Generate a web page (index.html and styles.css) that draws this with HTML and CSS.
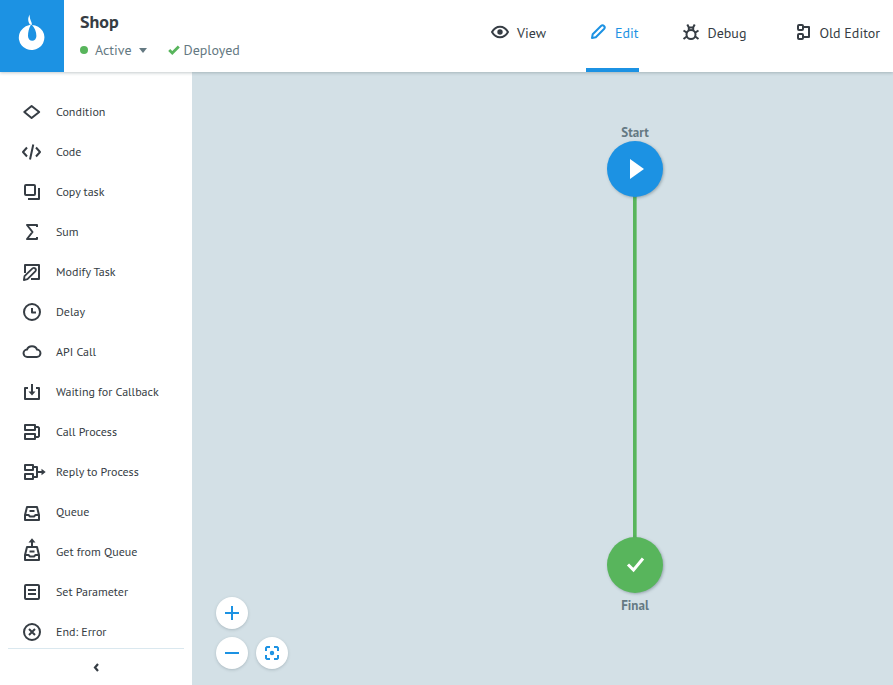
FILE: index.html
```html
<!DOCTYPE html>
<html lang="en">
<head>
<meta charset="utf-8">
<title>Shop</title>
<link rel="stylesheet" href="styles.css">
</head>
<body>
<header class="topbar">
  <a class="logo" href="#" aria-label="Home">
    <svg width="28" height="38" viewBox="-1 0 28 38"><path fill="#fff" d="M10.800 0.500C8.500 4 8.600 8 11.700 11.200C9.800 14.500 9 18 9 22A4.200 4.800 0 0 0 17.400 22C17.400 17.500 15.500 13.500 13 11A12.800 12.500 0 1 1 9.800 11.300L11.700 10.500L13 11C13 7.500 10 5 10.800 0.500Z"/></svg>
  </a>
  <div class="title">
    <h1>Shop</h1>
    <div class="status">
      <button class="state" type="button"><span class="dot"></span>Active<span class="caret"></span></button>
      <span class="deployed"><svg width="12" height="10" viewBox="0 0 12 10"><path d="M1.200 5L4.300 8L10.800 1.500" fill="none" stroke="#58b55c" stroke-width="2.800"/></svg>Deployed</span>
    </div>
  </div>
  <nav class="modes">
    <a href="#"><svg class="icon" viewBox="0 1 24 24"><path d="M4 12C8 5 16 5 20 12C16 19 8 19 4 12Z"/><circle class="solid" cx="12" cy="12" r="2.700"/></svg>View</a>
    <a href="#" class="current"><svg class="icon" viewBox="0 1 24 24"><path d="M6 18L6.700 14.200L15 6C17 4 20 6.800 18 9L9.800 17.300Z"/></svg>Edit</a>
    <a href="#"><svg class="icon" viewBox="0 1 24 24"><circle cx="12" cy="14.500" r="4.500"/><path d="M9.800 10V7.500H14.200V10M9.900 7.500L8.300 4.500M14.100 7.500L15.700 4.500M7.500 12.300L4.500 10.500M16.500 12.300L19.500 10.500M7.800 16.500L4.500 19M16.200 16.500L19.500 19"/></svg>Debug</a>
    <a href="#" class="legacy"><svg class="icon" viewBox="-3 1 24 24"><rect x="5" y="5" width="5" height="5" rx="1"/><rect x="5" y="14" width="5" height="5" rx="1"/><path d="M10 7H16V17H10"/></svg>Old Editor</a>
  </nav>
</header>
<div class="workspace">
  <aside class="sidebar">
    <div class="palette">
      <button type="button"><svg class="icon" viewBox="0 0 24 24"><path d="M4.300 12L11.600 6L19.200 12L11.600 18Z"/></svg>Condition</button>
      <button type="button"><svg class="icon" viewBox="0 0 24 24"><path d="M7 7.500L3 12L7 16.500M16 7.500L20 12L16 16.500M13.300 4.500L10 19.500"/></svg>Code</button>
      <button type="button"><svg class="icon" viewBox="0 0 24 24"><rect x="5" y="5" width="10" height="10" rx="1"/><path d="M19 8V19H8"/></svg>Copy task</button>
      <button type="button"><svg class="icon" viewBox="0 0 24 24"><path d="M17 7V5H7L12.500 12L7 19H17V17"/></svg>Sum</button>
      <button type="button"><svg class="icon" viewBox="0 0 24 24"><path d="M5 13V5H19V19H11"/><path class="fine" d="M3.900 20L4.500 16.200L12.500 8.400C14.500 6.800 17 9.300 15.300 11.300L7.500 19.200Z"/></svg>Modify Task</button>
      <button type="button"><svg class="icon" viewBox="0 0 24 24"><circle cx="12" cy="12" r="8"/><path d="M12 8V12.500H16"/></svg>Delay</button>
      <button type="button"><svg class="icon" viewBox="0 0 24 24"><path d="M7.500 17A3.500 3.500 0 0 1 7 9.600C8.500 5 15.500 5 17 9.600A3.500 3.500 0 0 1 16.500 17Z"/></svg>API Call</button>
      <button type="button"><svg class="icon" viewBox="0 0 24 24"><path d="M8 8H5V19H19V8H16M12 4V13"/><path class="solid" d="M8.500 11.500H15.500L12 15.500Z"/></svg>Waiting for Callback</button>
      <button type="button"><svg class="icon" viewBox="0 0 24 24"><rect x="5" y="5" width="10" height="5"/><rect x="5" y="14" width="10" height="5"/><path d="M15 7H18L19 8V16L18 17H15"/></svg>Call Process</button>
      <button type="button"><svg class="icon" viewBox="0 0 24 24"><rect x="5" y="5" width="8" height="5"/><rect x="5" y="14" width="8" height="5"/><path d="M13 7H17V17H13M17 12H22"/><path class="solid" d="M21.500 8.800V15.200L25.700 12Z"/></svg>Reply to Process</button>
      <button type="button"><svg class="icon" viewBox="0 0 24 24"><path d="M5 15L7 7H17L19 15V20H5ZM5 15H8.500L10 16.500H14L15.500 15H19M9.500 11H14.500"/></svg>Queue</button>
      <button type="button"><svg class="icon" viewBox="0 0 24 24"><path d="M5 15L7 7H17L19 15V20H5ZM5 15H8.500L10 16.500H14L15.500 15H19M9.500 11.500H14.500M12 7V1"/><path class="solid" d="M8.500 2.500H15.500L12 -1.700Z"/></svg>Get from Queue</button>
      <button type="button"><svg class="icon" viewBox="0 0 24 24"><rect x="5" y="5" width="14" height="14" rx="1"/><path d="M8 10H16M8 14H16"/></svg>Set Parameter</button>
      <button type="button"><svg class="icon" viewBox="0 0 24 24"><circle cx="12" cy="12" r="8"/><path d="M9 9L15 15M15 9L9 15"/></svg>End: Error</button>
    </div>
    <button class="collapse" type="button" aria-label="Collapse"><svg width="8" height="10" viewBox="0 0 8 10"><path d="M6 2L3 5.500L6 9" fill="none" stroke="#363d44" stroke-width="2.200"/></svg></button>
  </aside>
  <main class="canvas">
    <div class="edge"></div>
    <div class="node start"><span>Start</span><div class="disc"><svg width="56" height="56" viewBox="0 0 56 56"><path fill="#fff" d="M23 18L37 28L23 38Z"/></svg></div></div>
    <div class="node final"><div class="disc"><svg width="56" height="56" viewBox="0 0 56 56"><path d="M21 27.500L26.500 33L36 21.500" fill="none" stroke="#fff" stroke-width="3"/></svg></div><span>Final</span></div>
    <div class="zoom">
      <button type="button" aria-label="Zoom in"><svg viewBox="0 0 32 32"><path d="M9 16H23M16 9V23"/></svg></button>
      <button type="button" aria-label="Zoom out"><svg viewBox="0 0 32 32"><path d="M9 16H23"/></svg></button>
      <button type="button" aria-label="Fit to screen"><svg viewBox="0 0 32 32"><path d="M10 14V11L11 10H14M18 10H21L22 11V14M22 18V21L21 22H18M14 22H11L10 21V18"/><circle cx="16" cy="16" r="1.200"/></svg></button>
    </div>
  </main>
</div>
</body>
</html>
```
FILE: styles.css
```css
* { box-sizing: border-box; }
body {
  margin: 0;
  height: 100vh;
  display: flex;
  flex-direction: column;
  font-family: "PT Sans", Lato, sans-serif;
  font-size: 14px;
  color: #363d44;
  background: #fff;
}
button {
  font: inherit;
  color: inherit;
  background: none;
  border: 0;
  padding: 0;
  cursor: pointer;
}
a { color: inherit; text-decoration: none; }
svg { display: block; flex: none; }
.icon {
  width: 24px;
  height: 24px;
  overflow: visible;
  fill: none;
  stroke: currentColor;
  stroke-width: 2;
  stroke-linejoin: round;
}
.icon .solid { fill: currentColor; stroke: none; }
.icon .fine { fill: #fff; stroke-width: 1.8; }

.topbar {
  position: relative;
  z-index: 1;
  flex: none;
  display: flex;
  height: 72px;
  background: #fff;
  box-shadow: 0 1px 3px rgba(60, 80, 90, 0.3);
}
.logo {
  width: 64px;
  display: flex;
  justify-content: center;
  padding-top: 14px;
  background: #1c92e3;
}
.title { padding: 10px 16px; }
h1 {
  margin: 0;
  font-size: 18px;
  line-height: 24px;
}
.status {
  display: flex;
  align-items: center;
  gap: 21px;
  margin-top: 6px;
  line-height: 20px;
  color: #647982;
}
.state, .deployed { display: flex; align-items: center; }
.dot {
  width: 8px;
  height: 8px;
  margin-right: 7px;
  border-radius: 50%;
  background: #58b55c;
}
.caret {
  margin-left: 7px;
  border: solid transparent;
  border-width: 5px 4px 0;
  border-top-color: #647982;
}
.deployed { gap: 4px; }

.modes {
  display: flex;
  gap: 40px;
  margin-left: auto;
  padding-right: 13px;
}
.modes a {
  display: flex;
  align-items: center;
  gap: 5px;
  padding-bottom: 2px;
  border-bottom: 4px solid transparent;
}
.modes .current { color: #1c92e3; border-color: #1c92e3; }
.modes .legacy { margin-left: 4px; }

.workspace { flex: 1; display: flex; min-height: 0; }
.sidebar {
  width: 192px;
  flex: none;
  display: flex;
  flex-direction: column;
  padding: 20px 8px 0;
}
.palette {
  flex: 1;
  min-height: 0;
  overflow: hidden;
}
.palette button {
  display: flex;
  align-items: center;
  gap: 12px;
  width: 100%;
  height: 40px;
  padding-left: 12px;
  font-size: 12px;
  line-height: 16px;
}
.collapse {
  flex: none;
  display: flex;
  align-items: center;
  justify-content: center;
  height: 37px;
  border-top: 1px solid #dae8ef;
}

.canvas {
  position: relative;
  flex: 1;
  background: #d3e0e6;
}
.node {
  position: absolute;
  left: 415px;
  width: 56px;
  text-align: center;
  font-size: 13px;
  font-weight: bold;
  line-height: 17px;
  color: #647982;
}
.node span { display: block; }
.start { top: 52px; }
.final { top: 465px; }
.disc {
  border-radius: 50%;
  background: #1c92e3;
  box-shadow: 1px 1px 3px rgba(60, 80, 90, 0.4);
}
.final .disc { background: #58b55c; margin-bottom: 4px; }
.edge {
  position: absolute;
  left: 441px;
  top: 120px;
  width: 4px;
  height: 350px;
  background: #58b55c;
  border-right: 1px solid #84c68c;
}
.zoom {
  position: absolute;
  left: 24px;
  bottom: 16px;
  display: grid;
  grid-template-columns: 32px 32px;
  gap: 8px;
}
.zoom button {
  height: 32px;
  border-radius: 50%;
  background: #fff;
  box-shadow: 0 1px 3px rgba(60, 80, 90, 0.25);
}
.zoom button:first-child { grid-column: 1 / 3; width: 32px; }
.zoom svg { fill: none; stroke: #1c92e3; stroke-width: 2; }
```
